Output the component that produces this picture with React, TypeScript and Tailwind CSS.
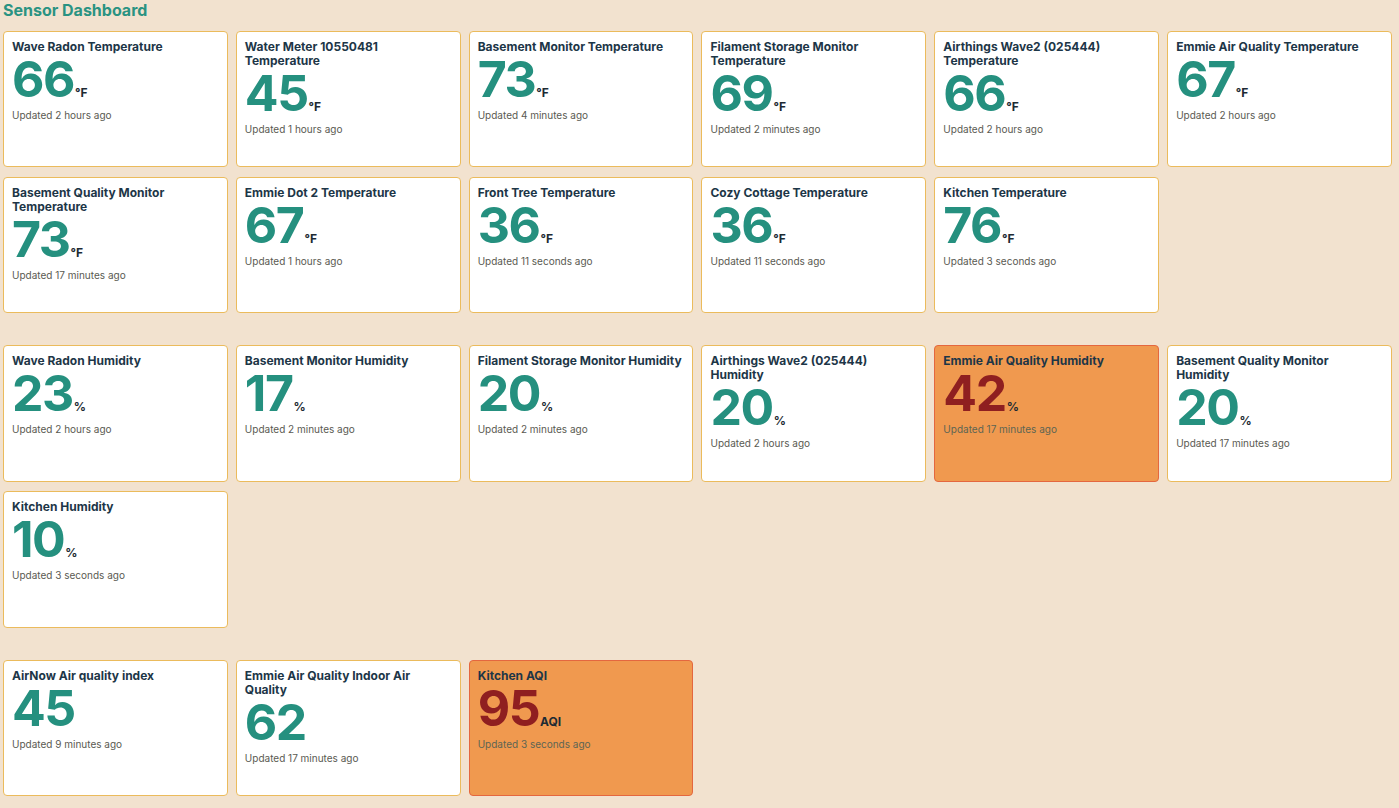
import React from "react";

type Sensor = {
  title: string;
  value: string;
  unit?: string;
  updated: string;
  alert?: boolean;
};

const temperature: Sensor[] = [
  { title: "Wave Radon Temperature", value: "66", unit: "°F", updated: "Updated 2 hours ago" },
  { title: "Water Meter 10550481 Temperature", value: "45", unit: "°F", updated: "Updated 1 hours ago" },
  { title: "Basement Monitor Temperature", value: "73", unit: "°F", updated: "Updated 4 minutes ago" },
  { title: "Filament Storage Monitor Temperature", value: "69", unit: "°F", updated: "Updated 2 minutes ago" },
  { title: "Airthings Wave2 (025444) Temperature", value: "66", unit: "°F", updated: "Updated 2 hours ago" },
  { title: "Emmie Air Quality Temperature", value: "67", unit: "°F", updated: "Updated 2 hours ago" },
  { title: "Basement Quality Monitor Temperature", value: "73", unit: "°F", updated: "Updated 17 minutes ago" },
  { title: "Emmie Dot 2 Temperature", value: "67", unit: "°F", updated: "Updated 1 hours ago" },
  { title: "Front Tree Temperature", value: "36", unit: "°F", updated: "Updated 11 seconds ago" },
  { title: "Cozy Cottage Temperature", value: "36", unit: "°F", updated: "Updated 11 seconds ago" },
  { title: "Kitchen Temperature", value: "76", unit: "°F", updated: "Updated 3 seconds ago" },
];

const humidity: Sensor[] = [
  { title: "Wave Radon Humidity", value: "23", unit: "%", updated: "Updated 2 hours ago" },
  { title: "Basement Monitor Humidity", value: "17", unit: "%", updated: "Updated 2 minutes ago" },
  { title: "Filament Storage Monitor Humidity", value: "20", unit: "%", updated: "Updated 2 minutes ago" },
  { title: "Airthings Wave2 (025444) Humidity", value: "20", unit: "%", updated: "Updated 2 hours ago" },
  { title: "Emmie Air Quality Humidity", value: "42", unit: "%", updated: "Updated 17 minutes ago", alert: true },
  { title: "Basement Quality Monitor Humidity", value: "20", unit: "%", updated: "Updated 17 minutes ago" },
  { title: "Kitchen Humidity", value: "10", unit: "%", updated: "Updated 3 seconds ago" },
];

const aqi: Sensor[] = [
  { title: "AirNow Air quality index", value: "45", updated: "Updated 9 minutes ago" },
  { title: "Emmie Air Quality Indoor Air Quality", value: "62", updated: "Updated 17 minutes ago" },
  { title: "Kitchen AQI", value: "95", unit: "AQI", updated: "Updated 3 seconds ago", alert: true },
];

function Card({ s }: { s: Sensor }) {
  return (
    <div
      className={
        s.alert
          ? "h-[136.5px] rounded-[4px] border border-[#e4673f] bg-[#f0994f] p-2"
          : "h-[136.5px] rounded-[4px] border border-[#ebbb5c] bg-white p-2"
      }
    >
      <div className="text-[12px] font-bold leading-[14px] text-[#1d3647]">{s.title}</div>
      <div className="flex items-baseline">
        <span
          className={
            s.alert
              ? "text-[50px] font-bold leading-[50px] tracking-[-1.5px] text-[#8f1f20]"
              : "text-[50px] font-bold leading-[50px] tracking-[-1.5px] text-[#25907f]"
          }
        >
          {s.value}
        </span>
        {s.unit && (
          <span className="ml-[1px] text-[12px] font-bold leading-[14px] text-[#1d2a33]">{s.unit}</span>
        )}
      </div>
      <div
        className={
          s.alert
            ? "mt-[4px] text-[10px] leading-[14px] text-[#5d6553]"
            : "mt-[4px] text-[10px] leading-[14px] text-[#5a5a52]"
        }
      >
        {s.updated}
      </div>
    </div>
  );
}

function Section({ items }: { items: Sensor[] }) {
  return (
    <div className="grid grid-cols-6 gap-x-[8px] gap-y-[9.5px]">
      {items.map((s, i) => (
        <Card key={i} s={s} />
      ))}
    </div>
  );
}

export default function App() {
  return (
    <div
      className="min-h-screen bg-[#f2e2cf] pl-[3px] pr-[7px] pt-0"
      style={{ fontFamily: "Inter, 'Noto Sans', sans-serif" }}
    >
      <h1 className="mb-[9.5px] text-[16px] font-bold leading-[21px] text-[#2a9382]">
        Sensor Dashboard
      </h1>
      <div className="flex flex-col gap-[32px]">
        <Section items={temperature} />
        <Section items={humidity} />
        <Section items={aqi} />
      </div>
    </div>
  );
}
